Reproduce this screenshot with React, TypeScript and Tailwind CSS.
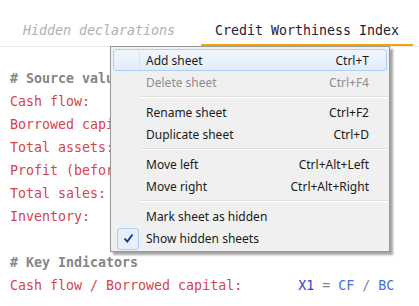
import React from 'react';

type MenuItem = { label: string; shortcut?: string; disabled?: boolean; active?: boolean; checked?: boolean } | 'sep';

const items: MenuItem[] = [
  { label: 'Add sheet', shortcut: 'Ctrl+T', active: true },
  { label: 'Delete sheet', shortcut: 'Ctrl+F4', disabled: true },
  'sep',
  { label: 'Rename sheet', shortcut: 'Ctrl+F2' },
  { label: 'Duplicate sheet', shortcut: 'Ctrl+D' },
  'sep',
  { label: 'Move left', shortcut: 'Ctrl+Alt+Left' },
  { label: 'Move right', shortcut: 'Ctrl+Alt+Right' },
  'sep',
  { label: 'Mark sheet as hidden' },
  { label: 'Show hidden sheets', checked: true },
];

const sourceLines = ['Cash flow:', 'Borrowed capital:', 'Total assets:', 'Profit (before tax):', 'Total sales:', 'Inventory:'];

const ContextMenu: React.FC = () => (
  <div
    className="absolute left-[110px] top-[46px] w-[280px] border border-[#979797] bg-[#f0f0f0] py-[2px] shadow-[3px_3px_2px_rgba(0,0,0,0.35)]"
    style={{ fontFamily: '"Noto Sans", "Open Sans", sans-serif' }}
  >
    {items.map((it, i) =>
      it === 'sep' ? (
        <div key={i} className="relative flex h-[8px] items-center pl-[30px]">
          <div className="h-[2px] w-full border-t border-[#e0e0e0] bg-white" />
        </div>
      ) : (
        <div key={i} className="relative mx-[2px] flex h-[22px] items-center pt-[1px] text-[12px]">
          {it.active && (
            <div className="absolute inset-0 rounded-[3px] border border-[#aecff7] bg-gradient-to-b from-[#f1f6fd] to-[#e2edfb]">
              <div className="absolute left-[25px] top-[1px] bottom-[1px] w-[1px] bg-[#d8e4f2]" />
            </div>
          )}
          <div className="relative flex w-[30px] justify-center">
            {it.checked && (
              <div className="flex h-[22px] w-[22px] items-center justify-center rounded-[3px] border border-[#aecff7] bg-[#e6effa]">
                <svg width="11" height="11" viewBox="0 0 11 11">
                  <path d="M1.5 5.5 L4.3 8.6 L9.5 1.5" fill="none" stroke="#1b2a8e" strokeWidth="1.8" />
                </svg>
              </div>
            )}
          </div>
          <span className={`relative pl-[3px] ${it.disabled ? 'text-[#8d8d8d]' : 'text-[#1a1a1a]'}`}>{it.label}</span>
          <span className={`relative ml-auto pr-[18px] ${it.disabled ? 'text-[#8d8d8d]' : 'text-[#1a1a1a]'}`}>{it.shortcut}</span>
        </div>
      )
    )}
  </div>
);

const App: React.FC = () => {
  return (
    <div
      className="relative h-[306px] w-[419px] overflow-hidden bg-white text-[13.3px]"
      style={{ fontFamily: '"DejaVu Sans Mono", monospace' }}
    >
      <div className="flex h-[47px] items-end border-b border-[#e8e8e8] pl-[7px]">
        <div className="flex h-[25px] w-[194px] items-start pl-[16px] italic text-[#b0b0b0]">Hidden declarations</div>
        <div className="flex h-[25px] w-[212px] items-start border-b-[2px] border-[#f5a500] pl-[14px] text-[#1c2233]">
          Credit Worthiness Index
        </div>
      </div>

      <div className="whitespace-pre pl-[10px] pt-[20px] leading-[23px]">
        <div className="font-bold text-[#858585]"># Source values</div>
        {sourceLines.map((l) => (
          <div key={l} className="text-[#d5434c]">{l}</div>
        ))}
        <div>&nbsp;</div>
        <div className="font-bold text-[#858585]"># Key Indicators</div>
        <div>
          <span className="text-[#d5434c]">Cash flow / Borrowed capital:</span>
          <span>       </span>
          <span className="text-[#2f3fd6]">X1</span>
          <span className="text-[#858585]"> = </span>
          <span className="text-[#3f6fe8]">CF</span>
          <span className="text-[#858585]"> / </span>
          <span className="text-[#3f6fe8]">BC</span>
        </div>
      </div>

      <ContextMenu />
    </div>
  );
};

export default App;
